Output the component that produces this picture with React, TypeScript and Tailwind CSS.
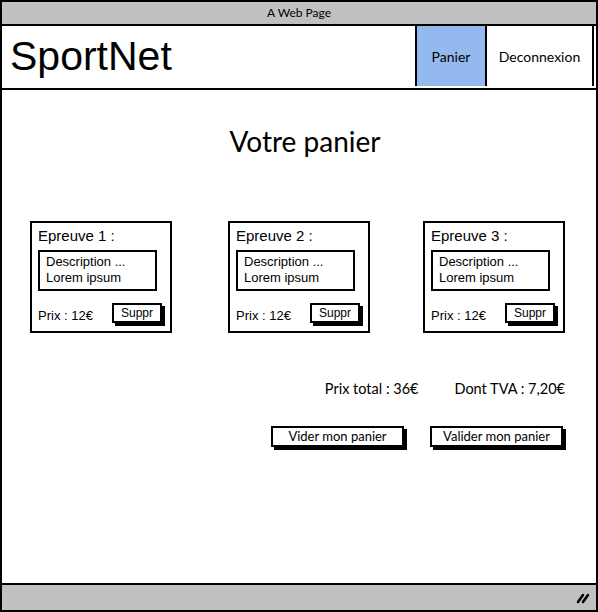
export default function App() {
  const cards = [
    { title: 'Epreuve 1 :', ml: 'ml-[28px]' },
    { title: 'Epreuve 2 :', ml: 'ml-[56px]' },
    { title: 'Epreuve 3 :', ml: 'ml-[53px]' },
  ];

  return (
    <div className="w-[598px] h-[612px] border-2 border-black flex flex-col bg-white text-black overflow-hidden">
      {/* title bar */}
      <div className="h-[24px] shrink-0 bg-[#c0c0c0] border-b-2 border-black flex items-center justify-center text-[12px] font-['Lato',sans-serif]">
        A Web Page
      </div>

      {/* header */}
      <div className="h-[64px] shrink-0 flex border-b-2 border-black">
        <div className="flex-1 flex items-center pl-[8px] pb-[2px] text-[41px] leading-none font-['Liberation_Sans',sans-serif]">
          SportNet
        </div>
        <div className="w-[70px] border-l-2 border-black bg-[#94b9ef] flex items-center justify-center text-[14px] font-['Lato',sans-serif] mb-[2px]">
          Panier
        </div>
        <div className="w-[109px] border-l-2 border-r-2 border-black flex items-center justify-center text-[14px] font-['Lato',sans-serif] mb-[2px] mr-[2px]">
          Deconnexion
        </div>
      </div>

      {/* content */}
      <div className="flex-1 flex flex-col">
        <h1 className="mt-[35px] text-center text-[28px] leading-[32px] font-['Lato',sans-serif] pl-[12px]">
          Votre panier
        </h1>

        <div className="flex mt-[64px] font-['Liberation_Sans',sans-serif]">
          {cards.map((c) => (
            <div key={c.title} className={`${c.ml} w-[142px] h-[112px] border-2 border-black pl-[6px] pt-[4px]`}>
              <div className="text-[15px] leading-[18px]">{c.title}</div>
              <div className="mt-[5px] w-[119px] h-[41px] border-2 border-black pl-[6px] pt-[2px] text-[13px] leading-[16px]">
                <div>Description ...</div>
                <div>Lorem ipsum</div>
              </div>
              <div className="flex items-start mt-[12px]">
                <span className="text-[13px] leading-[20px] mt-[3px]">Prix : 12€</span>
                <div className="ml-auto mr-[8px] w-[50px] h-[20px] border-2 border-black bg-white shadow-[3px_3px_0_#000] flex items-center justify-center text-[12px]">
                  Suppr
                </div>
              </div>
            </div>
          ))}
        </div>

        <div className="flex justify-end gap-[36px] pr-[31px] mt-[47px] text-[14.5px] leading-[18px] font-['Lato',sans-serif]">
          <span>Prix total : 36€</span>
          <span>Dont TVA : 7,20€</span>
        </div>

        <div className="flex justify-end gap-[26px] pr-[33px] mt-[28px] text-[13px] font-['Lato',sans-serif]">
          <div className="w-[133px] h-[21px] border-2 border-black bg-white shadow-[3px_3px_0_#000] flex items-center justify-center">
            Vider mon panier
          </div>
          <div className="w-[133px] h-[21px] border-2 border-black bg-white shadow-[3px_3px_0_#000] flex items-center justify-center">
            Valider mon panier
          </div>
        </div>
      </div>

      {/* footer */}
      <div className="h-[27px] shrink-0 bg-[#c0c0c0] border-t-2 border-black flex items-center justify-end pr-[6px]">
        <svg width="14" height="12" viewBox="0 0 14 12">
          <path d="M2 10 L7 3 M7 10 L12 3" stroke="#000" strokeWidth="2.5" strokeLinecap="round" />
        </svg>
      </div>
    </div>
  );
}
